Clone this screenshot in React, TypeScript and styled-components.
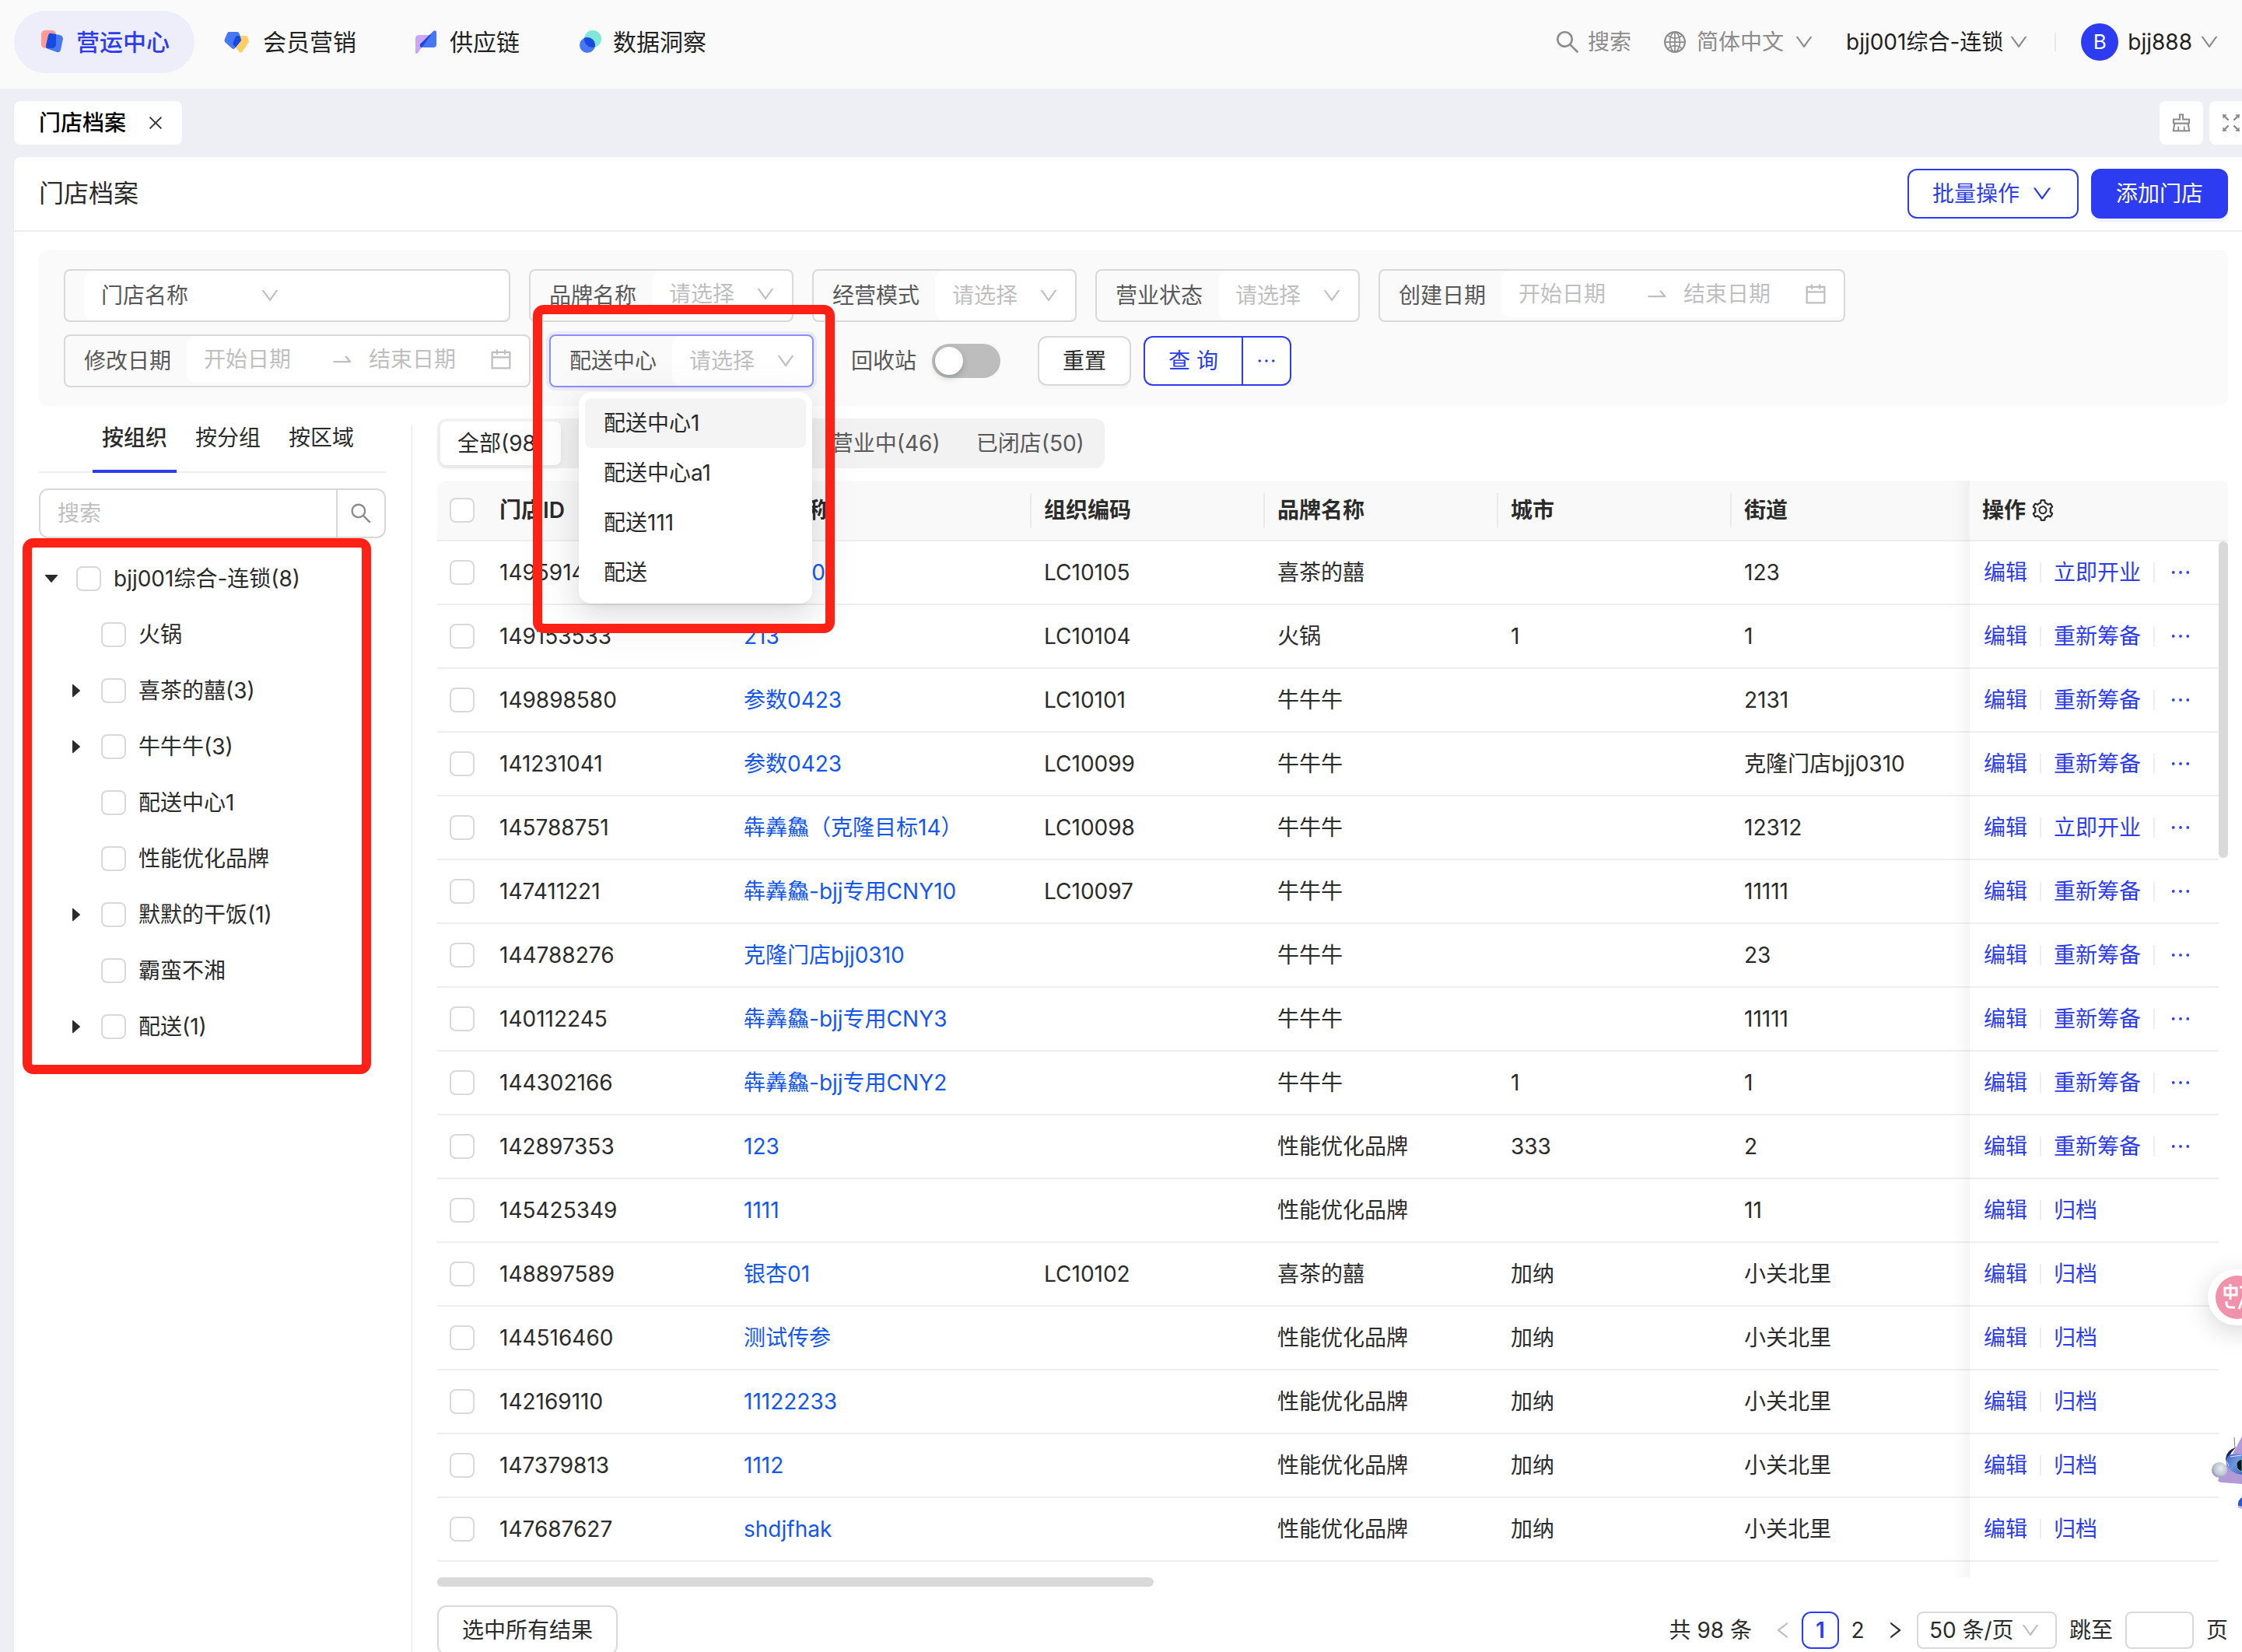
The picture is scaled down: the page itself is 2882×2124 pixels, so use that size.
import React from "react";
import styled, { createGlobalStyle, css } from "styled-components";
import {
  AiFillCaretDown,
  AiFillCaretRight,
  AiOutlineCalendar,
  AiOutlineClear,
  AiOutlineClose,
  AiOutlineDown,
  AiOutlineEllipsis,
  AiOutlineFullscreen,
  AiOutlineGlobal,
  AiOutlineLeft,
  AiOutlineRight,
  AiOutlineSearch,
  AiOutlineSetting,
  AiOutlineSwapRight,
} from "react-icons/ai";

const color = {
  primary: "#2d3cf0",
  link: "#1457f0",
  text: "#2b2b2b",
  sub: "#595959",
  muted: "#8c8c8c",
  hint: "#bfbfbf",
  border: "#d9d9d9",
  line: "#eeeeee",
  soft: "#fafafa",
  red: "#ff2116",
};

const GlobalStyle = createGlobalStyle`
  *, *::before, *::after { box-sizing: border-box; }
  body {
    margin: 0;
    background: #eeeff4;
    color: ${color.text};
    font-family: Inter, "Noto Sans CJK SC", sans-serif;
    font-size: 28px;
    line-height: 44px;
  }
  button, input, select { font: inherit; color: inherit; margin: 0; }
  button { cursor: pointer; }
  ul { list-style: none; margin: 0; padding: 0; }
  a { text-decoration: none; }
  svg { display: block; flex: none; overflow: visible; }
`;

/* ---------- shell ---------- */

const Shell = styled.div`
  display: flex;
  flex-direction: column;
  height: 100vh;
  overflow: hidden;
`;

const Header = styled.header`
  display: flex;
  align-items: center;
  justify-content: space-between;
  flex: none;
  padding: 14px 28px 20px 18px;
  background: ${color.soft};
`;

const MainNav = styled.nav`
  display: flex;
  gap: 8px;
`;

const NavLink = styled.a<{ $active?: boolean }>`
  display: flex;
  align-items: center;
  gap: 16px;
  height: 80px;
  padding: 0 32px;
  border-radius: 40px;
  font-size: 30px;
  font-weight: ${(p) => (p.$active ? 500 : 400)};
  color: ${(p) => (p.$active ? color.primary : "#222222")};
  background: ${(p) => (p.$active ? "#eeeefb" : "transparent")};
`;

const HeaderTools = styled.div`
  display: flex;
  align-items: center;
`;

const ToolButton = styled.button<{ $muted?: boolean; $gap: number; $space?: number }>`
  display: flex;
  align-items: center;
  gap: ${(p) => p.$gap}px;
  margin-left: ${(p) => p.$space ?? 0}px;
  padding: 0;
  border: 0;
  background: none;
  color: ${(p) => (p.$muted ? color.muted : "#1f1f1f")};
  > svg:last-child { color: ${color.muted}; }
`;

const ToolDivider = styled.span`
  width: 2px;
  height: 24px;
  margin: 0 32px;
  background: #e8e8e8;
`;

const Avatar = styled.span`
  display: grid;
  place-items: center;
  width: 48px;
  height: 48px;
  margin-right: 4px;
  border-radius: 50%;
  background: ${color.primary};
  color: #fff;
  font-size: 26px;
`;

const TabBar = styled.div`
  display: flex;
  justify-content: space-between;
  flex: none;
  margin-right: -14px;
  padding: 16px 0 16px 18px;
`;

const PageTab = styled.div`
  display: flex;
  align-items: center;
  gap: 26px;
  height: 56px;
  padding: 0 22px 0 32px;
  border-radius: 8px;
  background: #fff;
  color: #000;
  font-weight: 500;
`;

const CloseButton = styled.button`
  padding: 0;
  border: 0;
  background: none;
  color: #333;
`;

const TabTools = styled.div`
  display: flex;
  gap: 8px;
`;

const SquareButton = styled.button`
  display: grid;
  place-items: center;
  width: 56px;
  height: 56px;
  padding: 0;
  border: 0;
  border-radius: 8px;
  background: #fff;
  color: ${color.muted};
`;

const Panel = styled.main`
  flex: 1;
  display: flex;
  flex-direction: column;
  margin-left: 18px;
  border-top-left-radius: 8px;
  background: #fff;
`;

const TitleBar = styled.div`
  display: flex;
  align-items: center;
  justify-content: space-between;
  height: 96px;
  padding: 0 18px 0 32px;
  border-bottom: 2px solid ${color.line};
`;

const Title = styled.h1`
  margin: 0;
  font-size: 32px;
  font-weight: 400;
`;

const ButtonRow = styled.div`
  display: flex;
  gap: 16px;
`;

const Button = styled.button<{ $kind?: "primary" | "outline" }>`
  display: flex;
  align-items: center;
  gap: 14px;
  height: 64px;
  padding: 0 30px;
  border: 2px solid ${color.border};
  border-radius: 12px;
  background: #fff;
  box-shadow: 0 4px 0 rgba(0, 0, 0, 0.02);
  ${(p) =>
    p.$kind === "outline" &&
    css`
      border-color: ${color.primary};
      color: ${color.primary};
      box-shadow: none;
    `}
  ${(p) =>
    p.$kind === "primary" &&
    css`
      border-color: ${color.primary};
      background: ${color.primary};
      color: #fff;
      box-shadow: 0 4px 0 #f3f0ff;
    `}
`;

const PanelBody = styled.div`
  flex: 1;
  display: flex;
  flex-direction: column;
  padding: 24px 18px 0 32px;
`;

/* ---------- filters ---------- */

const Filters = styled.form`
  display: flex;
  flex-wrap: wrap;
  gap: 16px 24px;
  padding: 24px 32px;
  min-height: 200px;
  align-content: flex-start;
  border-radius: 12px;
  background: ${color.soft};
`;

const Field = styled.div<{ $width: number; $focused?: boolean }>`
  position: relative;
  display: flex;
  width: ${(p) => p.$width}px;
  height: 68px;
  border: 2px solid ${(p) => (p.$focused ? "#8c8ff7" : color.border)};
  border-radius: 8px;
  box-shadow: ${(p) => (p.$focused ? "0 0 0 4px #ebebfa" : "none")};
`;

const FieldLabel = styled.label`
  padding: 0 20px 0 24px;
  line-height: 64px;
  color: ${color.sub};
`;

const FieldPrefix = styled.span`
  width: 24px;
`;

const FieldBox = styled.div<{ $short?: boolean }>`
  flex: 1;
  display: flex;
  align-items: center;
  min-width: 0;
  height: ${(p) => (p.$short ? 60 : 64)}px;
  padding: 0 20px 0 22px;
  border-radius: 12px;
  background: #fff;
  color: ${color.hint};
`;

const PlainSelect = styled.select<{ $width?: number }>`
  appearance: none;
  flex: ${(p) => (p.$width ? "none" : "1")};
  width: ${(p) => (p.$width ? `${p.$width}px` : "auto")};
  min-width: 0;
  padding: 0;
  border: 0;
  outline: 0;
  background: none;
`;

const NameSelect = styled(PlainSelect)`
  color: ${color.sub};
`;

const PlainInput = styled.input`
  flex: 1;
  width: 0;
  min-width: 0;
  padding: 0;
  border: 0;
  outline: 0;
  background: none;
  &::placeholder { color: ${color.hint}; opacity: 1; }
`;

const RangeArrow = styled(AiOutlineSwapRight)`
  margin: 0 18px 0 8px;
`;

const SwitchLabel = styled.label`
  display: flex;
  align-items: center;
  gap: 20px;
  height: 68px;
  margin: 0 24px;
  color: ${color.sub};
`;

const Switch = styled.input`
  appearance: none;
  width: 88px;
  height: 44px;
  margin: 0;
  padding: 4px;
  border-radius: 22px;
  background: #bdbdbd;
  &::before {
    content: "";
    display: block;
    width: 36px;
    height: 36px;
    border-radius: 50%;
    background: #fff;
    box-shadow: 0 4px 8px rgba(0, 35, 11, 0.2);
  }
  &:checked::before { margin-left: auto; }
`;

const FilterActions = styled.div`
  display: flex;
  align-items: center;
  gap: 16px;
  height: 68px;
`;

const SplitButton = styled.div`
  display: flex;
  > button:first-child {
    border-radius: 12px 0 0 12px;
    border-right-width: 0;
  }
  > button:last-child {
    border-radius: 0 12px 12px 0;
    padding: 0 14px;
  }
`;

const Popup = styled.ul`
  position: absolute;
  z-index: 5;
  top: 72px;
  right: 0;
  width: 300px;
  padding: 8px;
  border-radius: 16px;
  background: #fff;
  box-shadow: 0 12px 32px rgba(0, 0, 0, 0.08), 0 6px 12px -8px rgba(0, 0, 0, 0.12),
    0 18px 56px 16px rgba(0, 0, 0, 0.05);
`;

const PopupItem = styled.li<{ $active?: boolean }>`
  height: 64px;
  padding: 0 24px;
  border-radius: 8px;
  line-height: 64px;
  color: ${color.text};
  background: ${(p) => (p.$active ? "#f4f4f4" : "transparent")};
`;

const MarkBox = styled.div<{ $top: number; $left: number; $width: number; $height: number }>`
  position: absolute;
  z-index: 6;
  top: ${(p) => p.$top}px;
  left: ${(p) => p.$left}px;
  width: ${(p) => p.$width}px;
  height: ${(p) => p.$height}px;
  border: 12px solid ${color.red};
  border-radius: 14px;
  pointer-events: none;
`;

/* ---------- sidebar ---------- */

const Content = styled.div`
  flex: 1;
  display: grid;
  grid-template-columns: 480px minmax(0, 1fr);
`;

const Sidebar = styled.aside`
  margin-top: 24px;
  padding-right: 32px;
  border-right: 2px solid #f0f0f0;
`;

const OrgTabs = styled.div`
  display: flex;
  gap: 12px;
  padding-left: 69px;
  height: 62px;
  border-bottom: 2px solid ${color.line};
`;

const OrgTab = styled.button<{ $active?: boolean }>`
  height: 62px;
  padding: 0 12px 24px;
  border: 0;
  border-bottom: 4px solid ${(p) => (p.$active ? color.primary : "transparent")};
  background: none;
  line-height: 34px;
  font-weight: ${(p) => (p.$active ? 500 : 400)};
`;

const SearchBox = styled.div`
  display: flex;
  height: 64px;
  margin: 20px 0 16px;
  padding-left: 22px;
  border: 2px solid ${color.border};
  border-radius: 12px;
`;

const SearchButton = styled.button`
  display: grid;
  place-items: center;
  width: 62px;
  padding: 0;
  border: 0;
  border-left: 2px solid ${color.border};
  background: none;
  color: ${color.muted};
`;

const Tree = styled.ul`
  position: relative;
`;

const TreeRow = styled.li<{ $level: number }>`
  display: flex;
  align-items: center;
  gap: 16px;
  height: 72px;
  padding-left: ${(p) => p.$level * 32}px;
`;

const Caret = styled.button`
  display: grid;
  place-items: center;
  width: 32px;
  height: 32px;
  padding: 0;
  border: 0;
  background: none;
`;

const CaretSpace = styled.span`
  width: 32px;
`;

const TreeLabel = styled.label`
  display: flex;
  align-items: center;
  gap: 16px;
`;

const Checkbox = styled.input`
  appearance: none;
  display: block;
  width: 32px;
  height: 32px;
  border: 2px solid ${color.border};
  border-radius: 8px;
  background: #fff;
`;

/* ---------- table ---------- */

const Listing = styled.section`
  padding: 16px 0 0 32px;
`;

const Segments = styled.div`
  display: inline-flex;
  gap: 2px;
  height: 64px;
  padding: 4px;
  border-radius: 12px;
  background: #f2f2f2;
  vertical-align: top;
`;

const Segment = styled.button<{ $active?: boolean }>`
  height: 56px;
  padding: 0 22px;
  border: 0;
  border-radius: 8px;
  white-space: nowrap;
  color: ${(p) => (p.$active ? color.text : color.sub)};
  background: ${(p) => (p.$active ? "#fff" : "transparent")};
  box-shadow: ${(p) => (p.$active ? "0 4px 8px rgba(0, 0, 0, 0.06)" : "none")};
`;

const TableArea = styled.div`
  position: relative;
  display: flex;
  margin-top: 16px;
  padding-bottom: 20px;
`;

const Table = styled.table`
  flex: 1;
  table-layout: fixed;
  width: 0;
  border-collapse: separate;
  border-spacing: 0;
`;

const Col = styled.col<{ $width?: number }>`
  width: ${(p) => (p.$width ? `${p.$width}px` : "auto")};
`;

const HeadCell = styled.th<{ $rule?: boolean }>`
  height: 78px;
  padding: 0 16px;
  border-bottom: 2px solid ${color.line};
  background: ${(p) =>
    p.$rule
      ? `linear-gradient(#eaeaea, #eaeaea) right center / 2px 44px no-repeat #f9f9f9`
      : "#f9f9f9"};
  text-align: left;
  font-weight: 600;
  white-space: nowrap;
  &:first-child { border-top-left-radius: 12px; }
`;

const Cell = styled.td`
  height: 82px;
  padding: 0 16px;
  border-bottom: 2px solid ${color.line};
  white-space: nowrap;
`;

const StoreLink = styled.a`
  color: ${color.link};
`;

const HeadFlex = styled.span`
  display: flex;
  align-items: center;
  gap: 6px;
`;

const Actions = styled.div`
  display: flex;
  align-items: center;
  padding-left: 2px;
`;

const ActionLink = styled.a`
  display: flex;
  align-items: center;
  height: 44px;
  color: ${color.primary};
  & + & {
    margin-left: 16px;
    padding-left: 18px;
    background: linear-gradient(#eeeeee, #eeeeee) left center / 2px 26px no-repeat;
  }
`;

const EdgeShadow = styled.div`
  position: absolute;
  top: 0;
  bottom: 0;
  right: 332px;
  width: 24px;
  background: linear-gradient(to right, rgba(0, 0, 0, 0), rgba(0, 0, 0, 0.015) 50%, rgba(0, 0, 0, 0.04));
`;

const ScrollColumn = styled.div`
  display: flex;
  flex-direction: column;
  width: 12px;
  &::before {
    content: "";
    height: 78px;
    border-bottom: 2px solid ${color.line};
    border-top-right-radius: 8px;
    background: #f9f9f9;
  }
`;

const ScrollTrack = styled.div`
  flex: 1;
`;

const VerticalThumb = styled.div`
  height: 31%;
  border-radius: 6px;
  background: ${color.border};
`;

const HorizontalThumb = styled.div`
  width: 40%;
  height: 12px;
  border-radius: 6px;
  background: ${color.border};
`;

const Footer = styled.footer`
  display: flex;
  justify-content: space-between;
  align-items: center;
  margin-top: 24px;
`;

const Pager = styled.nav`
  display: flex;
  align-items: center;
`;

const PageButton = styled.button<{ $active?: boolean; $disabled?: boolean }>`
  display: grid;
  place-items: center;
  width: 48px;
  height: 48px;
  padding: 0;
  border: 2px solid ${(p) => (p.$active ? color.primary : "transparent")};
  border-radius: 12px;
  background: none;
  font-weight: ${(p) => (p.$active ? 600 : 400)};
  color: ${(p) => (p.$active ? color.primary : p.$disabled ? color.hint : color.text)};
`;

const Total = styled.span`
  margin-right: 16px;
`;

const PageSize = styled.div`
  display: flex;
  align-items: center;
  width: 180px;
  height: 48px;
  margin: 0 16px 0 4px;
  padding: 0 18px 0 14px;
  border: 2px solid ${color.border};
  border-radius: 8px;
  > svg { color: ${color.hint}; }
`;

const JumpLabel = styled.label`
  display: flex;
  align-items: center;
  gap: 16px;
`;

const JumpInput = styled.input`
  width: 88px;
  height: 48px;
  border: 2px solid ${color.border};
  border-radius: 8px;
  background: #fff;
`;

const TranslateBadge = styled.button`
  position: fixed;
  z-index: 8;
  top: 1632px;
  right: -36px;
  width: 80px;
  height: 72px;
  padding: 8px 10px;
  border: 0;
  border-radius: 36px;
  background: #fff;
  box-shadow: 0 8px 32px rgba(0, 0, 0, 0.16);
`;

const Mascot = styled.button`
  position: fixed;
  z-index: 8;
  top: 1844px;
  right: 0;
  padding: 0;
  border: 0;
  background: none;
`;

/* ---------- drawings ---------- */

const OperateIcon = () => (
  <svg width="32" height="32" viewBox="0 0 32 32">
    <defs>
      <clipPath id="op">
        <rect x="3" y="1" width="19" height="23" rx="5" />
      </clipPath>
    </defs>
    <rect x="3" y="1" width="19" height="23" rx="5" fill="#ff9a97" />
    <path d="M16 5 L27 7 Q31 8 31 12 L28 26 Q27 30 23 29 L12 25 Q9 24 9 21 L12 8 Q13 4 16 5Z" fill="#4877f3" />
    <path clipPath="url(#op)" d="M16 5 L27 7 Q31 8 31 12 L28 26 Q27 30 23 29 L12 25 Q9 24 9 21 L12 8 Q13 4 16 5Z" fill="#194adf" />
  </svg>
);

const MemberIcon = () => (
  <svg width="32" height="32" viewBox="2 0 32 32">
    <defs>
      <clipPath id="mb">
        <path d="M17 8H28Q30 8 31 11L32 16L23 29Q21 31 19 28L11 18L14 11Q15 8 17 8Z" />
      </clipPath>
    </defs>
    <path d="M17 8H28Q30 8 31 11L32 16L23 29Q21 31 19 28L11 18L14 11Q15 8 17 8Z" fill="#ffce66" />
    <path d="M6 3H17Q19 3 20 6L22 14L14 24Q12 26 10 24L1 16Q0 14 1 12L4 5Q5 3 6 3Z" fill="#4877f3" />
    <path clipPath="url(#mb)" d="M6 3H17Q19 3 20 6L22 14L14 24Q12 26 10 24L1 16Q0 14 1 12L4 5Q5 3 6 3Z" fill="#194adf" />
  </svg>
);

const SupplyIcon = () => (
  <svg width="32" height="32" viewBox="-2 0 32 32">
    <defs>
      <clipPath id="sp">
        <path d="M2 30V12Q2 7 7 7H22L5 30Q3 32 2 30Z" />
      </clipPath>
    </defs>
    <path d="M2 30V12Q2 7 7 7H22L5 30Q3 32 2 30Z" fill="#cca6f2" />
    <path d="M29 3V19Q29 23 25 23H10Q7 22 8 19L25 2Q28 0 29 3Z" fill="#4877f3" />
    <path clipPath="url(#sp)" d="M29 3V19Q29 23 25 23H10Q7 22 8 19L25 2Q28 0 29 3Z" fill="#194adf" />
  </svg>
);

const InsightIcon = () => (
  <svg width="32" height="32" viewBox="-4 0 32 32">
    <defs>
      <clipPath id="is">
        <circle cx="18" cy="12" r="11" />
      </clipPath>
    </defs>
    <circle cx="18" cy="12" r="11" fill="#80e6da" />
    <circle cx="11" cy="20" r="10" fill="#4877f3" />
    <circle clipPath="url(#is)" cx="11" cy="20" r="10" fill="#194adf" />
  </svg>
);

const TranslateGlyph = () => (
  <svg width="56" height="56" viewBox="0 0 56 56">
    <circle cx="28" cy="28" r="28" fill="#f092ab" />
    <g fill="none" stroke="#fff" strokeWidth="3">
      <path d="M12 16H27V25H12ZM19 11V31M14 33V36Q14 41 20 41H25" />
      <path d="M31 15H44M30 43L37 25L44 43" />
    </g>
  </svg>
);

const MascotDrawing = () => (
  <svg width="40" height="98" viewBox="0 0 40 98">
    <defs>
      <radialGradient id="ball" cx="0.6" cy="0.4" r="0.7">
        <stop offset="0" stopColor="#e9eef2" />
        <stop offset="0.6" stopColor="#bcc5d2" />
        <stop offset="1" stopColor="#8c7db5" />
      </radialGradient>
      <linearGradient id="visor" x1="0" y1="0" x2="1" y2="1">
        <stop offset="0" stopColor="#3e61c4" />
        <stop offset="0.5" stopColor="#6f95dc" />
        <stop offset="1" stopColor="#4668bd" />
      </linearGradient>
    </defs>
    <path d="M40 3L27 27L9 59Q10 62 14 62L40 64Z" fill="#b29ad8" />
    <path d="M30 4L31 18" stroke="#777" strokeWidth="1" />
    <path d="M32 17Q19 21 19 34L23 29Q26 23 32 17Z" fill="#1a2350" />
    <path d="M40 25L25 26Q18 30 20 38Q24 50 40 52Z" fill="url(#visor)" />
    <path d="M25 29L39 27M21 36L23 41" stroke="#d6e4fa" strokeWidth="1" />
    <path d="M40 32Q32 34 33 40Q33 46 40 48Z" fill="#061a20" stroke="#68b9c9" strokeWidth="1" />
    <circle cx="11" cy="46" r="10" fill="url(#ball)" />
    <path d="M40 81Q34 85 35 92L40 93Z" fill="#2f57cf" />
    <path d="M35 93L40 95" stroke="#bda6e6" strokeWidth="2" />
  </svg>
);

/* ---------- data ---------- */

type Row = [id: string, name: string, code: string, brand: string, city: string, street: string, action: string];

const rows: Row[] = [
  ["149591420", "202400", "LC10105", "喜茶的囍", "", "123", "立即开业"],
  ["149153533", "213", "LC10104", "火锅", "1", "1", "重新筹备"],
  ["149898580", "参数0423", "LC10101", "牛牛牛", "", "2131", "重新筹备"],
  ["141231041", "参数0423", "LC10099", "牛牛牛", "", "克隆门店bjj0310", "重新筹备"],
  ["145788751", "犇羴鱻（克隆目标14）", "LC10098", "牛牛牛", "", "12312", "立即开业"],
  ["147411221", "犇羴鱻-bjj专用CNY10", "LC10097", "牛牛牛", "", "11111", "重新筹备"],
  ["144788276", "克隆门店bjj0310", "", "牛牛牛", "", "23", "重新筹备"],
  ["140112245", "犇羴鱻-bjj专用CNY3", "", "牛牛牛", "", "11111", "重新筹备"],
  ["144302166", "犇羴鱻-bjj专用CNY2", "", "牛牛牛", "1", "1", "重新筹备"],
  ["142897353", "123", "", "性能优化品牌", "333", "2", "重新筹备"],
  ["145425349", "1111", "", "性能优化品牌", "", "11", "归档"],
  ["148897589", "银杏01", "LC10102", "喜茶的囍", "加纳", "小关北里", "归档"],
  ["144516460", "测试传参", "", "性能优化品牌", "加纳", "小关北里", "归档"],
  ["142169110", "11122233", "", "性能优化品牌", "加纳", "小关北里", "归档"],
  ["147379813", "1112", "", "性能优化品牌", "加纳", "小关北里", "归档"],
  ["147687627", "shdjfhak", "", "性能优化品牌", "加纳", "小关北里", "归档"],
];

const tree: { label: string; level: number; caret?: "down" | "right" }[] = [
  { label: "bjj001综合-连锁(8)", level: 0, caret: "down" },
  { label: "火锅", level: 1 },
  { label: "喜茶的囍(3)", level: 1, caret: "right" },
  { label: "牛牛牛(3)", level: 1, caret: "right" },
  { label: "配送中心1", level: 1 },
  { label: "性能优化品牌", level: 1 },
  { label: "默默的干饭(1)", level: 1, caret: "right" },
  { label: "霸蛮不湘", level: 1 },
  { label: "配送(1)", level: 1, caret: "right" },
];

const nav = [
  { label: "营运中心", Icon: OperateIcon },
  { label: "会员营销", Icon: MemberIcon },
  { label: "供应链", Icon: SupplyIcon },
  { label: "数据洞察", Icon: InsightIcon },
];

/* ---------- pieces ---------- */

function SelectField(props: { id: string; label: string; short?: boolean; focused?: boolean; children?: React.ReactNode }) {
  return (
    <Field $width={340} $focused={props.focused}>
      <FieldLabel htmlFor={props.id}>{props.label}</FieldLabel>
      <FieldBox $short={props.short}>
        <PlainSelect id={props.id}>
          <option>请选择</option>
        </PlainSelect>
        <AiOutlineDown size={28} />
      </FieldBox>
      {props.children}
    </Field>
  );
}

function DateField({ id, label }: { id: string; label: string }) {
  return (
    <Field $width={600}>
      <FieldLabel htmlFor={id}>{label}</FieldLabel>
      <FieldBox $short>
        <PlainInput id={id} placeholder="开始日期" />
        <RangeArrow size={32} />
        <PlainInput aria-label={`${label}结束`} placeholder="结束日期" />
        <AiOutlineCalendar size={32} />
      </FieldBox>
    </Field>
  );
}

function FilterBar() {
  return (
    <Filters onSubmit={(e) => e.preventDefault()}>
      <Field $width={574}>
        <FieldPrefix />
        <FieldBox>
          <NameSelect $width={203} aria-label="查询字段">
            <option>门店名称</option>
          </NameSelect>
          <AiOutlineDown size={28} />
          <PlainInput aria-label="门店名称" />
        </FieldBox>
      </Field>
      <SelectField id="brand" label="品牌名称" short />
      <SelectField id="mode" label="经营模式" />
      <SelectField id="status" label="营业状态" />
      <DateField id="created" label="创建日期" />
      <DateField id="updated" label="修改日期" />
      <SelectField id="center" label="配送中心" focused>
        <Popup role="listbox" aria-label="配送中心">
          {["配送中心1", "配送中心a1", "配送111", "配送"].map((name, i) => (
            <PopupItem key={name} role="option" aria-selected={i === 0} $active={i === 0}>
              {name}
            </PopupItem>
          ))}
        </Popup>
        <MarkBox $top={-40} $left={-23} $width={388} $height={422} />
      </SelectField>
      <SwitchLabel>
        回收站
        <Switch type="checkbox" role="switch" />
      </SwitchLabel>
      <FilterActions>
        <Button type="reset">重置</Button>
        <SplitButton>
          <Button type="submit" $kind="outline">
            查 询
          </Button>
          <Button type="button" $kind="outline" aria-label="更多">
            <AiOutlineEllipsis size={32} />
          </Button>
        </SplitButton>
      </FilterActions>
    </Filters>
  );
}

function OrgSidebar() {
  return (
    <Sidebar>
      <OrgTabs>
        {["按组织", "按分组", "按区域"].map((name, i) => (
          <OrgTab key={name} $active={i === 0}>
            {name}
          </OrgTab>
        ))}
      </OrgTabs>
      <SearchBox>
        <PlainInput placeholder="搜索" aria-label="搜索组织" />
        <SearchButton aria-label="搜索">
          <AiOutlineSearch size={32} />
        </SearchButton>
      </SearchBox>
      <Tree>
        <MarkBox $top={-16} $left={-21} $width={448} $height={689} />
        {tree.map((node) => (
          <TreeRow key={node.label} $level={node.level}>
            {node.caret ? (
              <Caret aria-label={node.label}>
                {node.caret === "down" ? <AiFillCaretDown size={24} /> : <AiFillCaretRight size={24} />}
              </Caret>
            ) : (
              <CaretSpace />
            )}
            <TreeLabel>
              <Checkbox type="checkbox" />
              {node.label}
            </TreeLabel>
          </TreeRow>
        ))}
      </Tree>
    </Sidebar>
  );
}

function StoreTable() {
  return (
    <TableArea>
      <Table>
        <colgroup>
          <Col $width={64} />
          <Col $width={314} />
          <Col $width={386} />
          <Col $width={300} />
          <Col $width={300} />
          <Col $width={300} />
          <Col />
          <Col $width={320} />
        </colgroup>
        <thead>
          <tr>
            <HeadCell>
              <Checkbox type="checkbox" aria-label="全选" />
            </HeadCell>
            <HeadCell $rule>门店ID</HeadCell>
            <HeadCell $rule>门店名称</HeadCell>
            <HeadCell $rule>组织编码</HeadCell>
            <HeadCell $rule>品牌名称</HeadCell>
            <HeadCell $rule>城市</HeadCell>
            <HeadCell>街道</HeadCell>
            <HeadCell>
              <HeadFlex>
                操作
                <AiOutlineSetting size={32} />
              </HeadFlex>
            </HeadCell>
          </tr>
        </thead>
        <tbody>
          {rows.map(([id, name, code, brand, city, street, action]) => (
            <tr key={id}>
              <Cell>
                <Checkbox type="checkbox" aria-label={id} />
              </Cell>
              <Cell>{id}</Cell>
              <Cell>
                <StoreLink href="#">{name}</StoreLink>
              </Cell>
              <Cell>{code}</Cell>
              <Cell>{brand}</Cell>
              <Cell>{city}</Cell>
              <Cell>{street}</Cell>
              <Cell>
                <Actions>
                  <ActionLink href="#">编辑</ActionLink>
                  <ActionLink href="#">{action}</ActionLink>
                  {action !== "归档" && (
                    <ActionLink href="#" aria-label="更多">
                      <AiOutlineEllipsis size={34} />
                    </ActionLink>
                  )}
                </Actions>
              </Cell>
            </tr>
          ))}
        </tbody>
      </Table>
      <ScrollColumn>
        <ScrollTrack>
          <VerticalThumb />
        </ScrollTrack>
      </ScrollColumn>
      <EdgeShadow />
    </TableArea>
  );
}

export default function App() {
  return (
    <Shell>
      <GlobalStyle />
      <Header>
        <MainNav>
          {nav.map(({ label, Icon }, i) => (
            <NavLink key={label} href="#" $active={i === 0}>
              <Icon />
              {label}
            </NavLink>
          ))}
        </MainNav>
        <HeaderTools>
          <ToolButton $muted $gap={8}>
            <AiOutlineSearch size={36} />
            搜索
          </ToolButton>
          <ToolButton $muted $gap={12} $space={40}>
            <AiOutlineGlobal size={32} />
            简体中文
            <AiOutlineDown size={28} />
          </ToolButton>
          <ToolButton $gap={6} $space={40}>
            bjj001综合-连锁
            <AiOutlineDown size={28} />
          </ToolButton>
          <ToolDivider />
          <ToolButton $gap={8}>
            <Avatar>B</Avatar>
            bjj888
            <AiOutlineDown size={28} />
          </ToolButton>
        </HeaderTools>
      </Header>
      <TabBar>
        <PageTab>
          门店档案
          <CloseButton aria-label="关闭">
            <AiOutlineClose size={24} />
          </CloseButton>
        </PageTab>
        <TabTools>
          <SquareButton aria-label="清理">
            <AiOutlineClear size={30} />
          </SquareButton>
          <SquareButton aria-label="全屏">
            <AiOutlineFullscreen size={32} />
          </SquareButton>
        </TabTools>
      </TabBar>
      <Panel>
        <TitleBar>
          <Title>门店档案</Title>
          <ButtonRow>
            <Button $kind="outline">
              批量操作
              <AiOutlineDown size={30} />
            </Button>
            <Button $kind="primary">添加门店</Button>
          </ButtonRow>
        </TitleBar>
        <PanelBody>
          <FilterBar />
          <Content>
            <OrgSidebar />
            <Listing>
              <Segments>
                <Segment $active>全部(98)</Segment>
                <Segment>筹备中(1)</Segment>
                <Segment>待开业(1)</Segment>
                <Segment>营业中(46)</Segment>
                <Segment>已闭店(50)</Segment>
              </Segments>
              <StoreTable />
              <HorizontalThumb />
              <Footer>
                <Button>选中所有结果</Button>
                <Pager aria-label="分页">
                  <Total>共 98 条</Total>
                  <PageButton aria-label="上一页" $disabled>
                    <AiOutlineLeft size={28} />
                  </PageButton>
                  <PageButton $active>1</PageButton>
                  <PageButton>2</PageButton>
                  <PageButton aria-label="下一页">
                    <AiOutlineRight size={28} />
                  </PageButton>
                  <PageSize>
                    <PlainSelect aria-label="每页条数">
                      <option>50 条/页</option>
                    </PlainSelect>
                    <AiOutlineDown size={28} />
                  </PageSize>
                  <JumpLabel>
                    跳至
                    <JumpInput />
                    页
                  </JumpLabel>
                </Pager>
              </Footer>
            </Listing>
          </Content>
        </PanelBody>
      </Panel>
      <TranslateBadge aria-label="翻译">
        <TranslateGlyph />
      </TranslateBadge>
      <Mascot aria-label="助手">
        <MascotDrawing />
      </Mascot>
    </Shell>
  );
}
